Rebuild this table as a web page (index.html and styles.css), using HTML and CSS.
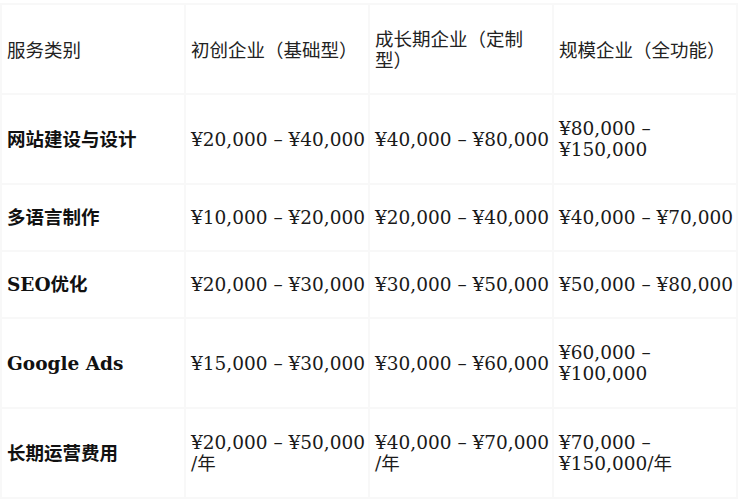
FILE: index.html
```html
<!DOCTYPE html>
<html lang="zh">
<head>
<meta charset="utf-8">
<link rel="stylesheet" href="styles.css">
</head>
<body>
<table class="pricing">
  <thead>
    <tr>
      <th class="head">服务类别</th>
      <th class="head">初创企业（基础型）</th>
      <th class="head">成长期企业（定制型）</th>
      <th class="head">规模企业（全功能）</th>
    </tr>
  </thead>
  <tbody>
    <tr>
      <th class="service">网站建设与设计</th>
      <td>¥20,000 – ¥40,000</td>
      <td>¥40,000 – ¥80,000</td>
      <td>¥80,000 – ¥150,000</td>
    </tr>
    <tr class="compact">
      <th class="service">多语言制作</th>
      <td>¥10,000 – ¥20,000</td>
      <td>¥20,000 – ¥40,000</td>
      <td>¥40,000 – ¥70,000</td>
    </tr>
    <tr class="compact">
      <th class="service">SEO优化</th>
      <td>¥20,000 – ¥30,000</td>
      <td>¥30,000 – ¥50,000</td>
      <td>¥50,000 – ¥80,000</td>
    </tr>
    <tr>
      <th class="service">Google Ads</th>
      <td>¥15,000 – ¥30,000</td>
      <td>¥30,000 – ¥60,000</td>
      <td>¥60,000 – ¥100,000</td>
    </tr>
    <tr>
      <th class="service">长期运营费用</th>
      <td><span class="nw">¥20,000 – ¥50,000</span><wbr>/年</td>
      <td><span class="nw">¥40,000 – ¥70,000</span><wbr>/年</td>
      <td>¥70,000 – ¥150,000/年</td>
    </tr>
  </tbody>
</table>
</body>
</html>
```

FILE: styles.css
```css
html, body {
  margin: 0;
  padding: 0;
  background: #ffffff;
}

body {
  padding-top: 3px;
}

.pricing {
  width: 738px;
  table-layout: fixed;
  border-collapse: separate;
  border-spacing: 2px;
  background: #f8f8f8;
  font-family: "DejaVu Serif", "Noto Sans CJK SC", serif;
  font-size: 18.5px;
  line-height: 21px;
  color: #1a1a1a;
}

.pricing th,
.pricing td {
  background: #ffffff;
  padding: 23px 1px 23px 5px;
  text-align: left;
  vertical-align: middle;
}

.pricing .compact th,
.pricing .compact td {
  padding-top: 22px;
  padding-bottom: 22px;
}

.pricing .head {
  font-family: "Noto Sans CJK SC", sans-serif;
  font-weight: 400;
  color: #222222;
  padding-right: 9px;
}

.pricing .service {
  font-weight: 700;
  color: #111111;
}

.nw {
  white-space: nowrap;
}
```
